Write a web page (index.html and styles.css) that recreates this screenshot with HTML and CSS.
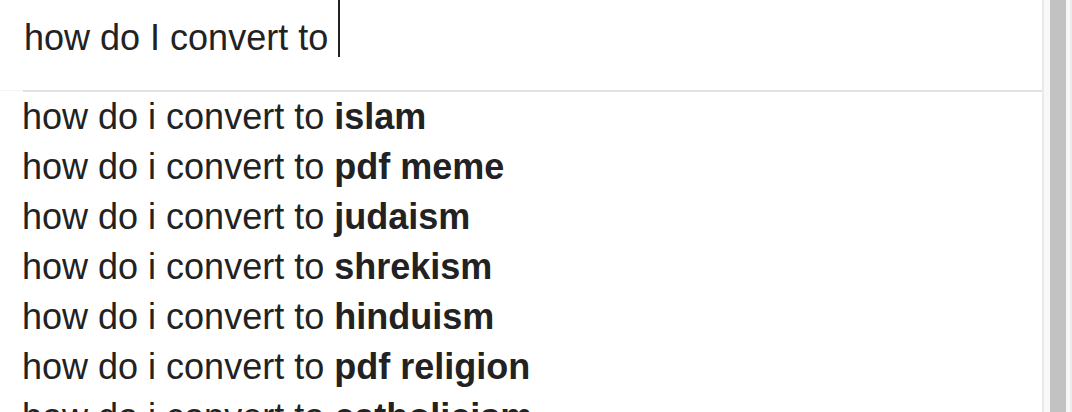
FILE: index.html
```html
<!DOCTYPE html>
<html lang="en">
<head>
    <meta charset="UTF-8">
    <meta name="viewport" content="width=device-width, initial-scale=1.0">
    <title>Search</title>

    <link rel="stylesheet" href="styles.css">
</head>
<body>
    <div class="page">
        <div class="main">
            <div class="search">
                <span class="query">how do I convert to </span>
                <span class="caret"></span>
            </div>
            <div class="divider"></div>
            <ul class="suggestions">
                <li class="item">how do i convert to <b>islam</b></li>
                <li class="item">how do i convert to <b>pdf meme</b></li>
                <li class="item">how do i convert to <b>judaism</b></li>
                <li class="item">how do i convert to <b>shrekism</b></li>
                <li class="item">how do i convert to <b>hinduism</b></li>
                <li class="item">how do i convert to <b>pdf religion</b></li>
                <li class="item">how do i convert to <b>catholicism</b></li>
            </ul>
        </div>
        <div class="scrollbar">
            <div class="thumb"></div>
        </div>
    </div>
</body>
</html>
```
FILE: styles.css
```css
html, body {
    margin: 0;
    height: 100%;
    overflow: hidden;
    background: #fff;
}

.page {
    display: flex;
    height: 412px;
    font-family: "Liberation Sans", Arial, sans-serif;
    font-size: 36px;
    color: #222;
}

.main {
    flex: 1;
    min-width: 0;
}

.search {
    display: flex;
    align-items: flex-start;
    height: 90px;
    padding-left: 24px;
    border-bottom: 1px solid #f4f4f4;
}

.query {
    white-space: pre;
    line-height: 50px;
    padding-top: 13px;
}

.caret {
    width: 2px;
    height: 57px;
    background: #222;
}

.divider {
    height: 2px;
    margin-left: 23px;
    margin-top: -1px;
    background: #e1e1e6;
}

.suggestions {
    list-style: none;
    margin: 0;
    padding: 0 0 0 22px;
}

.item {
    line-height: 50px;
    white-space: nowrap;
}

.item b {
    font-weight: bold;
}

.scrollbar {
    width: 16px;
    padding: 0 4px 0 6px;
    background: #f8f8f8;
    border-left: 2px solid #e9e9e9;
    border-right: 2px solid #ececec;
    display: flex;
}

.thumb {
    flex: 1;
    background: #c2c2c2;
}
```
